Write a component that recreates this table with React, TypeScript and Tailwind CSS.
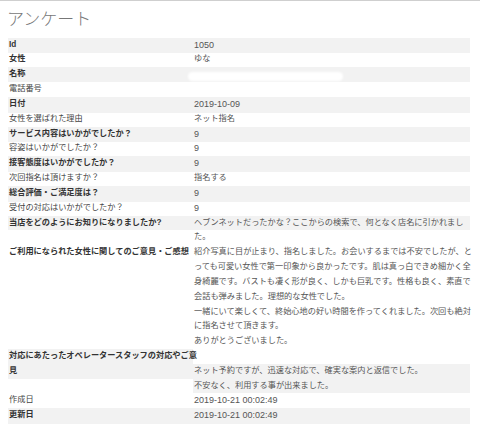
import React from 'react'

type Line = {
    label?: string
    value?: React.ReactNode
    boldLabel?: boolean
    grayLeft?: boolean
    grayRight?: boolean
}

const num = (v: string) => <span className="text-[9px]">{v}</span>

// each visual line of the survey table; stripes follow the reference line by line
const lines: Line[] = [
    { label: 'Id', value: num('1050'), boldLabel: true, grayLeft: true, grayRight: true },
    { label: '女性', value: 'ゆな', boldLabel: true },
    {
        label: '名称',
        boldLabel: true,
        grayLeft: true,
        grayRight: true,
        value: <span className="ml-[-6px] mt-[5px] block h-[9px] w-[155px] rounded-full bg-white blur-[1px]" />,
    },
    { label: '電話番号' },
    { label: '日付', value: num('2019-10-09'), boldLabel: true, grayLeft: true, grayRight: true },
    { label: '女性を選ばれた理由', value: 'ネット指名' },
    { label: 'サービス内容はいかがでしたか？', value: num('9'), boldLabel: true, grayLeft: true, grayRight: true },
    { label: '容姿はいかがでしたか？', value: num('9') },
    { label: '接客態度はいかがでしたか？', value: num('9'), boldLabel: true, grayLeft: true, grayRight: true },
    { label: '次回指名は頂けますか？', value: '指名する' },
    { label: '総合評価・ご満足度は？', value: num('9'), boldLabel: true, grayLeft: true, grayRight: true },
    { label: '受付の対応はいかがでしたか？', value: num('9') },
    {
        label: '当店をどのようにお知りになりましたか?',
        value: 'ヘブンネットだったかな？ここからの検索で、何となく店名に引かれまし',
        boldLabel: true,
        grayLeft: true,
        grayRight: true,
    },
    { value: 'た。' },
    { label: 'ご利用になられた女性に関してのご意見・ご感想', value: '紹介写真に目が止まり、指名しました。お会いするまでは不安でしたが、と', boldLabel: true },
    { value: 'っても可愛い女性で第一印象から良かったです。肌は真っ白できめ細かく全' },
    { value: '身綺麗です。バストも凄く形が良く、しかも巨乳です。性格も良く、素直で' },
    { value: '会話も弾みました。理想的な女性でした。' },
    { value: '一緒にいて楽しくて、終始心地の好い時間を作ってくれました。次回も絶対' },
    { value: 'に指名させて頂きます。' },
    { value: 'ありがとうございました。' },
    { label: '対応にあたったオペレータースタッフの対応やご意', boldLabel: true, grayLeft: true },
    { label: '見', value: 'ネット予約ですが、迅速な対応で、確実な案内と返信でした。', boldLabel: true, grayLeft: true, grayRight: true },
    { value: '不安なく、利用する事が出来ました。', grayRight: true },
    { label: '作成日', value: num('2019-10-21 00:02:49') },
    { label: '更新日', value: num('2019-10-21 00:02:49'), boldLabel: true, grayLeft: true, grayRight: true },
]

export default function App() {
    return (
        <div
            className="h-[433px] w-[480px] overflow-hidden border-t border-[#cfcfcf] bg-white"
            style={{ fontFamily: '"Liberation Sans", "Noto Sans CJK JP", sans-serif' }}
        >
            {/* TITLE */}
            <div className="flex h-[36.6px] items-center pl-[7px]">
                <h1 className="text-[17px] font-light leading-none text-[#777]">アンケート</h1>
            </div>

            {/* SURVEY TABLE */}
            <div className="ml-2 w-[462px] text-[8.2px] leading-[14.84px]">
                {lines.map((line, i) => (
                    <div key={i} className="grid h-[14.84px] grid-cols-[185px_1fr]">
                        <div
                            className={`whitespace-nowrap pl-px ${line.grayLeft ? 'bg-[#f2f2f2]' : ''} ${
                                line.boldLabel ? 'font-bold text-[#333]' : 'text-[#444]'
                            }`}
                        >
                            {line.label}
                        </div>
                        <div className={`whitespace-nowrap pl-px text-[#555] ${line.grayRight ? 'bg-[#f2f2f2]' : ''}`}>
                            {line.value}
                        </div>
                    </div>
                ))}
            </div>
        </div>
    )
}
